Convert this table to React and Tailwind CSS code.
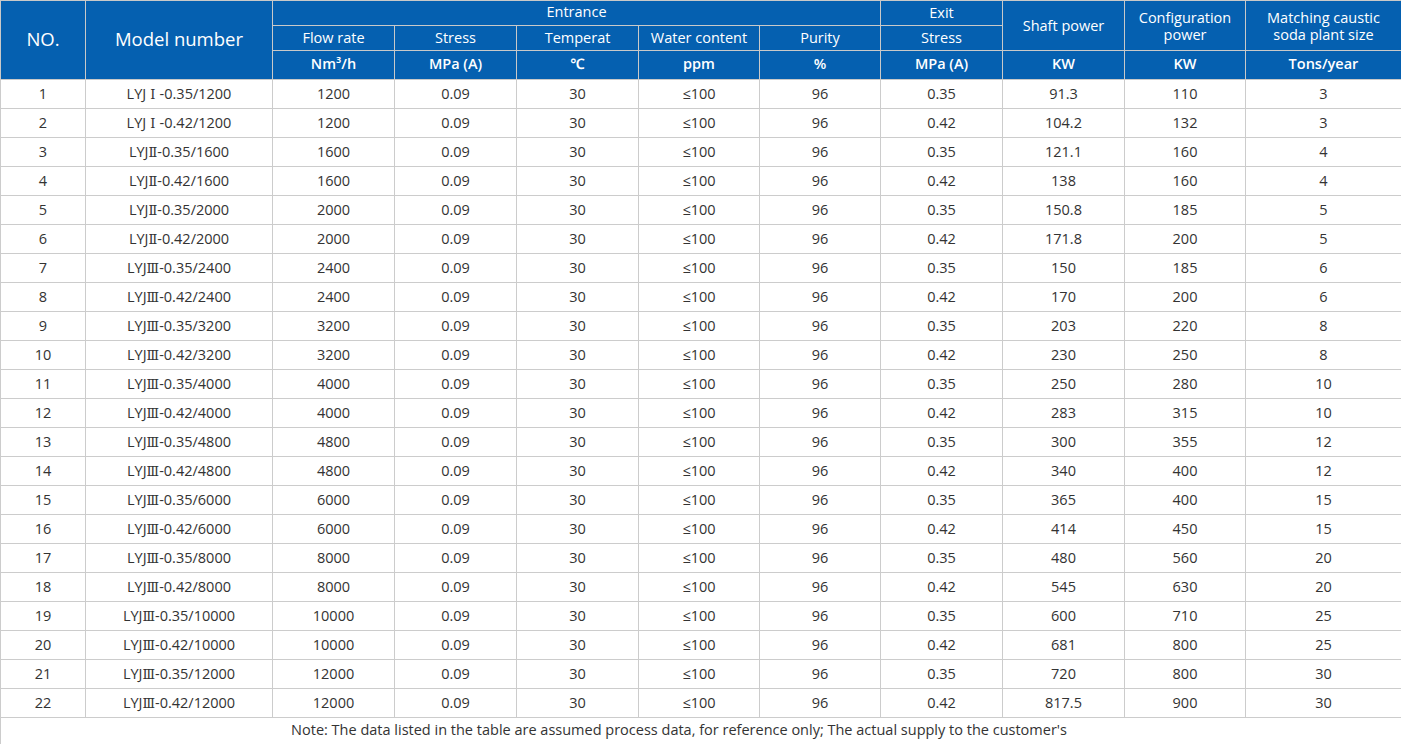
import React from 'react';

const rows = [
  ['1', 'LYJ', ' Ⅰ ', '-0.35/1200', '1200', '0.35', '91.3', '110', '3'],
  ['2', 'LYJ', ' Ⅰ ', '-0.42/1200', '1200', '0.42', '104.2', '132', '3'],
  ['3', 'LYJ', 'Ⅱ', '-0.35/1600', '1600', '0.35', '121.1', '160', '4'],
  ['4', 'LYJ', 'Ⅱ', '-0.42/1600', '1600', '0.42', '138', '160', '4'],
  ['5', 'LYJ', 'Ⅱ', '-0.35/2000', '2000', '0.35', '150.8', '185', '5'],
  ['6', 'LYJ', 'Ⅱ', '-0.42/2000', '2000', '0.42', '171.8', '200', '5'],
  ['7', 'LYJ', 'Ⅲ', '-0.35/2400', '2400', '0.35', '150', '185', '6'],
  ['8', 'LYJ', 'Ⅲ', '-0.42/2400', '2400', '0.42', '170', '200', '6'],
  ['9', 'LYJ', 'Ⅲ', '-0.35/3200', '3200', '0.35', '203', '220', '8'],
  ['10', 'LYJ', 'Ⅲ', '-0.42/3200', '3200', '0.42', '230', '250', '8'],
  ['11', 'LYJ', 'Ⅲ', '-0.35/4000', '4000', '0.35', '250', '280', '10'],
  ['12', 'LYJ', 'Ⅲ', '-0.42/4000', '4000', '0.42', '283', '315', '10'],
  ['13', 'LYJ', 'Ⅲ', '-0.35/4800', '4800', '0.35', '300', '355', '12'],
  ['14', 'LYJ', 'Ⅲ', '-0.42/4800', '4800', '0.42', '340', '400', '12'],
  ['15', 'LYJ', 'Ⅲ', '-0.35/6000', '6000', '0.35', '365', '400', '15'],
  ['16', 'LYJ', 'Ⅲ', '-0.42/6000', '6000', '0.42', '414', '450', '15'],
  ['17', 'LYJ', 'Ⅲ', '-0.35/8000', '8000', '0.35', '480', '560', '20'],
  ['18', 'LYJ', 'Ⅲ', '-0.42/8000', '8000', '0.42', '545', '630', '20'],
  ['19', 'LYJ', 'Ⅲ', '-0.35/10000', '10000', '0.35', '600', '710', '25'],
  ['20', 'LYJ', 'Ⅲ', '-0.42/10000', '10000', '0.42', '681', '800', '25'],
  ['21', 'LYJ', 'Ⅲ', '-0.35/12000', '12000', '0.35', '720', '800', '30'],
  ['22', 'LYJ', 'Ⅲ', '-0.42/12000', '12000', '0.42', '817.5', '900', '30'],
];

const widths = [85, 187, 122, 122, 122, 121, 121, 122, 122, 121, 156];

// header cell / body cell base classes
const th = 'border border-[#c9c9c9] bg-[#0560b0] text-white font-normal text-center align-middle p-0 leading-[17px]';
const td = 'border border-[#cccccc] text-center align-middle p-0 pb-[1px] h-[29px]';

export default function App() {
  return (
    <div
      className="w-[1401px] bg-white text-[#333] text-[14.5px]"
      style={{ fontFamily: '"Open Sans", "Noto Sans", "Noto Sans CJK SC", sans-serif' }}
    >
      <table className="border-collapse table-fixed w-[1401px]">
        <colgroup>
          {widths.map((w, i) => (
            <col key={i} style={{ width: w }} />
          ))}
        </colgroup>
        <thead>
          <tr className="h-[25px]">
            <th rowSpan={3} className={`${th} text-[18.5px] pb-[4px]`}>NO.</th>
            <th rowSpan={3} className={`${th} text-[18.5px] pb-[4px]`}>Model number</th>
            <th colSpan={5} className={`${th} pb-[3px]`}>Entrance</th>
            <th className={`${th} pb-[1px]`}>Exit</th>
            <th rowSpan={2} className={th}>Shaft power</th>
            <th rowSpan={2} className={th}>Configuration<br />power</th>
            <th rowSpan={2} className={th}>Matching caustic<br />soda plant size</th>
          </tr>
          <tr className="h-[25px]">
            <th className={`${th} pb-[1px]`}>Flow rate</th>
            <th className={`${th} pb-[1px]`}>Stress</th>
            <th className={`${th} pb-[1px]`}>Temperat</th>
            <th className={`${th} pb-[1px]`}>Water content</th>
            <th className={`${th} pb-[1px]`}>Purity</th>
            <th className={`${th} pb-[1px]`}>Stress</th>
          </tr>
          <tr className="h-[29px]">
            <th className={`${th} font-semibold pb-[4px]`}>Nm³/h</th>
            <th className={`${th} font-semibold pb-[4px]`}>MPa (A)</th>
            <th className={`${th} font-semibold pb-[4px]`}>℃</th>
            <th className={`${th} font-semibold pb-[4px]`}>ppm</th>
            <th className={`${th} font-semibold pb-[4px]`}>%</th>
            <th className={`${th} font-semibold pb-[4px]`}>MPa (A)</th>
            <th className={`${th} font-semibold pb-[4px]`}>KW</th>
            <th className={`${th} font-semibold pb-[4px]`}>KW</th>
            <th className={`${th} font-semibold pb-[4px]`}>Tons/year</th>
          </tr>
        </thead>
        <tbody>
          {rows.map(r => (
            <tr key={r[0]}>
              <td className={td}>{r[0]}</td>
              <td className={`${td} whitespace-pre`}>
                {r[1]}
                <span style={{ fontFamily: '"DejaVu Serif", "Liberation Serif", serif' }} className="text-[13px]">{r[2]}</span>
                {r[3]}
              </td>
              <td className={td}>{r[4]}</td>
              <td className={td}>0.09</td>
              <td className={td}>30</td>
              <td className={td}>≤100</td>
              <td className={td}>96</td>
              <td className={td}>{r[5]}</td>
              <td className={td}>{r[6]}</td>
              <td className={td}>{r[7]}</td>
              <td className={td}>{r[8]}</td>
            </tr>
          ))}
          <tr>
            <td colSpan={11} className="border border-[#cccccc] text-center align-middle p-0 pb-[2px] h-[27px] pr-[44px]">
              Note: The data listed in the table are assumed process data, for reference only; The actual supply to the customer's
            </td>
          </tr>
        </tbody>
      </table>
    </div>
  );
}
